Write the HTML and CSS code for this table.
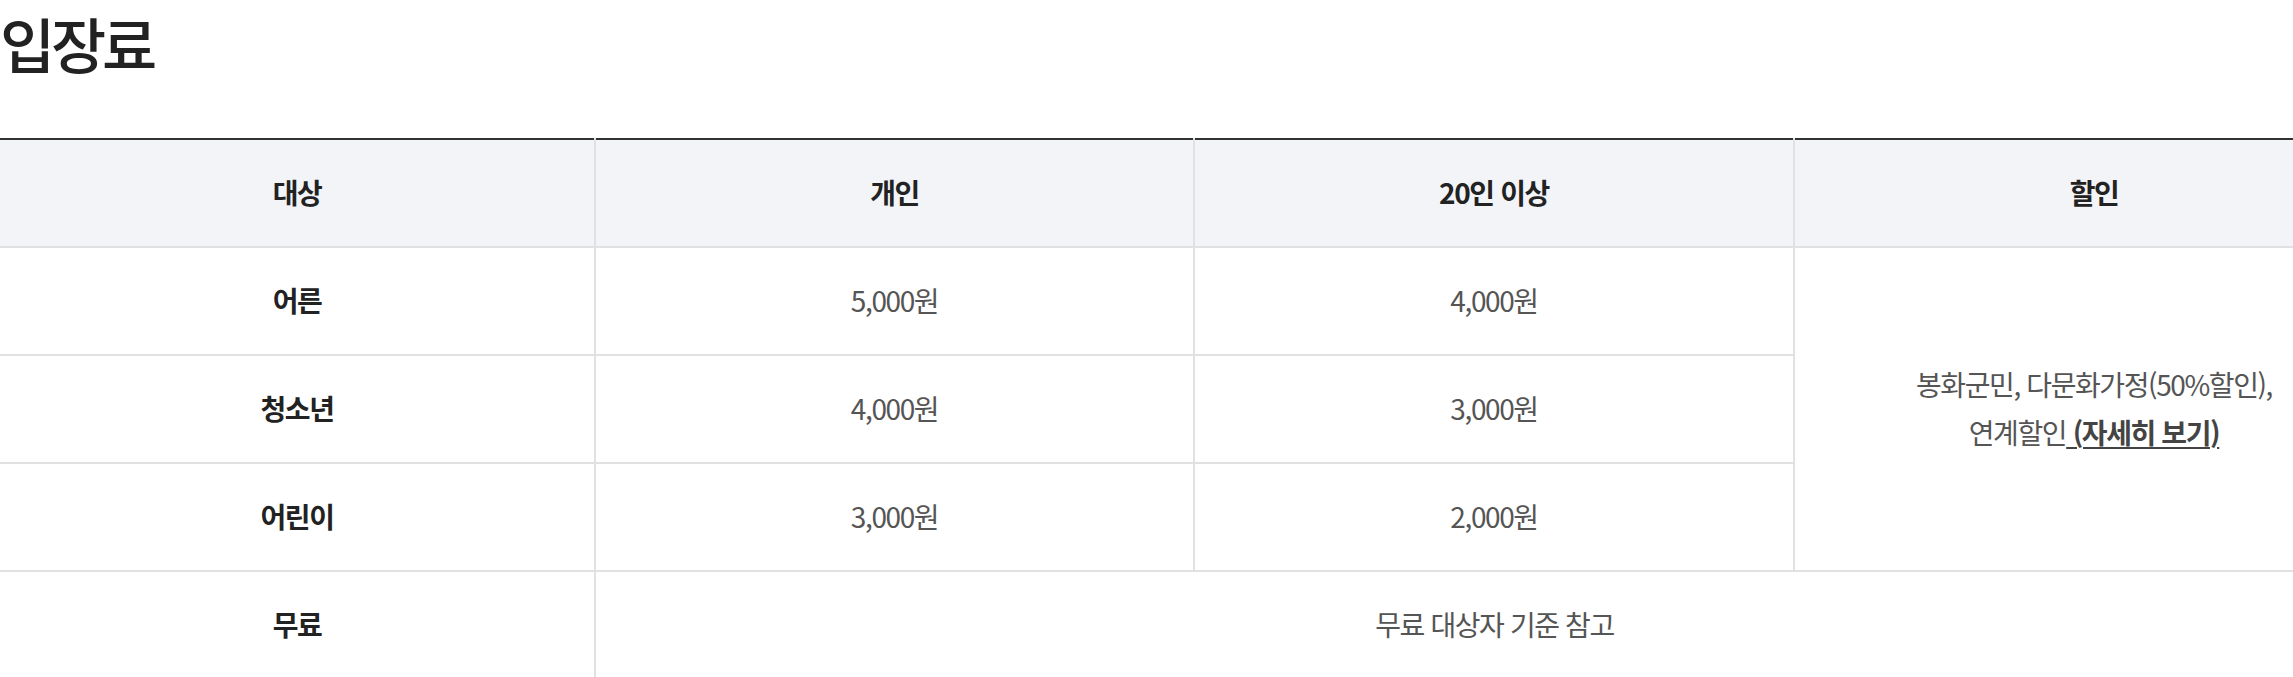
FILE: index.html
```html
<!DOCTYPE html>
<html lang="ko">
<head>
<meta charset="utf-8">
<title>입장료</title>
<link rel="stylesheet" href="styles.css">
</head>
<body>
<section class="fee">
  <h2 class="fee-title">입장료</h2>
  <table class="fee-table">
    <colgroup>
      <col class="c1"><col class="c2"><col class="c3"><col class="c4">
    </colgroup>
    <thead>
      <tr>
        <th>대상</th>
        <th>개인</th>
        <th>20인 이상</th>
        <th>할인</th>
      </tr>
    </thead>
    <tbody>
      <tr>
        <th class="rowhead">어른</th>
        <td>5,000원</td>
        <td>4,000원</td>
        <td rowspan="3" class="discount">봉화군민, 다문화가정(50%할인),<br>연계할인<a href="#" class="more"> (자세히 보기)</a></td>
      </tr>
      <tr>
        <th class="rowhead">청소년</th>
        <td>4,000원</td>
        <td>3,000원</td>
      </tr>
      <tr>
        <th class="rowhead">어린이</th>
        <td>3,000원</td>
        <td>2,000원</td>
      </tr>
      <tr>
        <th class="rowhead">무료</th>
        <td colspan="3">무료 대상자 기준 참고</td>
      </tr>
    </tbody>
  </table>
</section>
</body>
</html>
```
FILE: styles.css
```css
html, body {
  margin: 0;
  padding: 0;
  overflow: hidden;
  background: #fff;
}
body {
  font-family: "Noto Sans CJK KR", "Noto Sans", sans-serif;
  color: #222;
}
.fee {
  width: 2394px;
}
.fee-title {
  margin: 0;
  padding-top: 3px;
  height: 135px;
  font-size: 60px;
  line-height: 80px;
  font-weight: 500;
  letter-spacing: -0.07em;
  color: #222;
}
.fee-table {
  width: 2394px;
  table-layout: fixed;
  border-collapse: collapse;
  border-top: 2px solid #333;
  font-size: 28px;
  letter-spacing: -0.05em;
}
.c1 { width: 595px; }
.c2 { width: 599px; }
.c3 { width: 600px; }
.c4 { width: 600px; }
.fee-table tr {
  height: 108px;
}
.fee-table th,
.fee-table td {
  padding: 0 0 3px;
  text-align: center;
  vertical-align: middle;
  border: 2px solid #e1e1e1;
}
.fee-table thead th {
  border-top: 2px solid #333;
  background: #f3f4f8;
  font-weight: 700;
  color: #222;
}
.fee-table tr > :first-child {
  border-left: none;
}
.fee-table .rowhead {
  font-weight: 700;
  color: #222;
  background: #fff;
}
.fee-table td {
  color: #555;
  font-weight: 400;
}
.discount {
  line-height: 48px;
}
.more {
  color: #444;
  font-weight: 700;
  text-decoration: underline;
  text-decoration-thickness: 2px;
  text-underline-offset: 3px;
}
```
